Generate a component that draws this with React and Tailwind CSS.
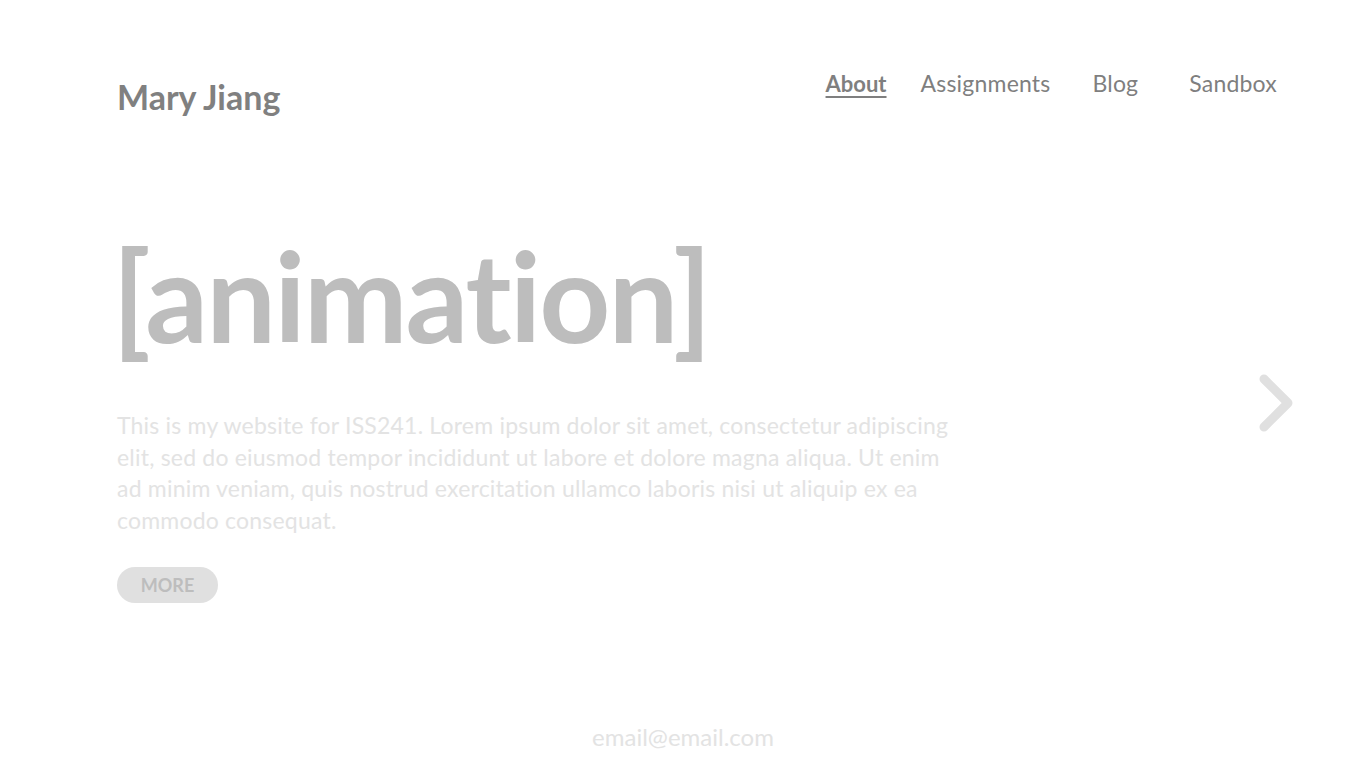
export default function App() {
  const font = { fontFamily: '"Lato", "Noto Sans", sans-serif' };
  return (
    <div className="relative w-[1366px] h-[768px] bg-white overflow-hidden [font-variant-ligatures:none]" style={font}>
      <header className="flex items-start justify-between pl-[117px] pr-[89px] pt-[70px]">
        <div className="text-[34px] font-bold text-[#808080] leading-none mt-[10px]">Mary Jiang</div>
        <nav className="flex items-center text-[23px] tracking-[0.2px] text-[#7f7f7f] leading-none pt-[2px]">
          <a className="text-[22px] tracking-normal font-bold underline underline-offset-[4px] decoration-[2px]">About</a>
          <a className="ml-[34px]">Assignments</a>
          <a className="ml-[42px]">Blog</a>
          <a className="ml-[51px]">Sandbox</a>
        </nav>
      </header>
      <main className="pl-[117px] pt-[119px] w-[960px]">
        <h1 className="-ml-[5px] text-[124px] tracking-[-2px] font-bold text-[#bdbdbd] leading-none">[animation]</h1>
        <p className="mt-[53px] text-[23px] tracking-[0.2px] leading-[31.5px] text-[#e3e3e3] w-[840px]">
          This is my website for ISS241. Lorem ipsum dolor sit amet, consectetur adipiscing elit, sed do eiusmod tempor incididunt ut labore et dolore magna aliqua. Ut enim ad minim veniam, quis nostrud exercitation ullamco laboris nisi ut aliquip ex ea commodo consequat.
        </p>
        <button className="mt-[31px] w-[101px] h-[36px] rounded-full bg-[#e0e0e0] text-[#bdbdbd] font-bold text-[18px] flex items-center justify-center">MORE</button>
      </main>
      <svg className="absolute left-[1254px] top-[372px]" width="44" height="62" viewBox="0 0 44 62">
        <polyline points="10,7 34,31 10,55" fill="none" stroke="#e0e0e0" strokeWidth="9" strokeLinecap="round" strokeLinejoin="round" />
      </svg>
      <footer className="absolute bottom-[13px] left-0 right-0 text-center text-[24px] text-[#e3e3e3]">email@email.com</footer>
    </div>
  );
}
